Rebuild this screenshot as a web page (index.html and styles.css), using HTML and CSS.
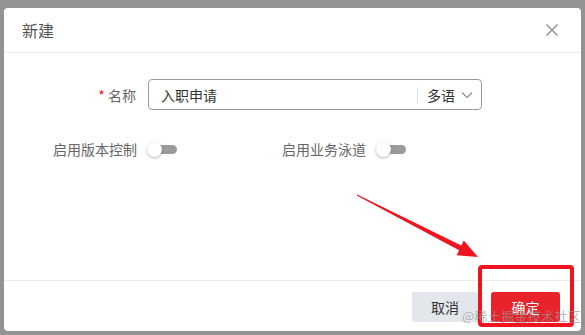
FILE: index.html
```html
<!DOCTYPE html>
<html lang="zh-CN">
<head>
    <meta charset="UTF-8">
    <title>新建</title>
    <link rel="stylesheet" href="styles.css">
</head>
<body>
    <div class="dialog">
        <div class="dialog-header">
            <span class="dialog-title">新建</span>
            <span class="dialog-close">
                <svg width="14" height="14" viewBox="0 0 14 14"><path d="M1.5 1.5 L12.5 12.5 M12.5 1.5 L1.5 12.5" stroke="#8a8a8a" stroke-width="1.4" fill="none"/></svg>
            </span>
        </div>

        <div class="dialog-body">
            <div class="form-row">
                <label class="form-label"><span class="required">*</span> 名称</label>
                <div class="name-input">
                    <span class="name-value">入职申请</span>
                    <span class="lang-select">
                        多语
                        <svg width="12" height="8" viewBox="0 0 12 8"><path d="M1 1.5 L6 6.5 L11 1.5" stroke="#888" stroke-width="1.1" fill="none"/></svg>
                    </span>
                </div>
            </div>

            <div class="switch-row">
                <div class="switch-item">
                    <span class="switch-label">启用版本控制</span>
                    <span class="switch"><span class="knob"></span></span>
                </div>
                <div class="switch-item second">
                    <span class="switch-label">启用业务泳道</span>
                    <span class="switch"><span class="knob"></span></span>
                </div>
            </div>
        </div>

        <div class="dialog-footer">
            <button class="btn btn-cancel">取消</button>
            <button class="btn btn-ok">确定</button>
        </div>
    </div>

    <!-- annotations over the screenshot -->
    <svg class="arrow" width="585" height="335" viewBox="0 0 585 335">
        <polygon points="357.2,194.4 461.3,245.4 463.8,240.6 478,257 456.6,255.2 459.1,250.3 356.8,195.6" fill="#f0141e"/>
    </svg>
    <div class="mark-box"></div>
    <div class="watermark">@稀土掘金技术社区</div>
</body>
</html>
```

FILE: styles.css
```css
body {
    margin: 0;
    width: 585px;
    height: 335px;
    background: #939393;
    font-family: "Noto Sans CJK SC", "Noto Sans", sans-serif;
    overflow: hidden;
}

.dialog {
    box-sizing: border-box;
    width: 577px;
    height: 323px;
    margin: 8px 0 0 4px;
    background: #fff;
    border-radius: 4px;
    display: flex;
    flex-direction: column;
}

.dialog-header {
    height: 44px;
    border-bottom: 1px solid #ececec;
    display: flex;
    align-items: center;
    justify-content: space-between;
    padding: 0 22px 0 18px;
}

.dialog-title {
    font-size: 16px;
    color: #555;
}

.dialog-close {
    display: flex;
}

.dialog-body {
    flex: 1;
    padding-top: 26px;
}

.form-row {
    display: flex;
    align-items: center;
}

.form-label {
    width: 132px;
    text-align: right;
    font-size: 14px;
    color: #666;
    margin-right: 12px;
}

.required {
    color: #f0141e;
}

.name-input {
    box-sizing: border-box;
    width: 334px;
    height: 31px;
    border: 1px solid #9a9a9a;
    border-radius: 4px;
    display: flex;
    align-items: center;
    justify-content: space-between;
    padding: 0 8px 0 12px;
}

.name-value {
    font-size: 14px;
    color: #333;
}

.lang-select {
    display: flex;
    align-items: center;
    gap: 6px;
    font-size: 14px;
    color: #333;
    border-left: 1px solid #ddd;
    padding-left: 9px;
    height: 16px;
    line-height: 16px;
}

.switch-row {
    display: flex;
    margin-top: 29px;
    padding-left: 49px;
}

.switch-item {
    display: flex;
    align-items: center;
    width: 229px;
}

.switch-item.second {
    width: auto;
}

.switch-label {
    font-size: 14px;
    color: #666;
    margin-right: 10px;
}

.switch {
    position: relative;
    width: 30px;
    height: 14px;
    display: inline-block;
}

.switch::before {
    content: "";
    position: absolute;
    left: 6px;
    top: 3px;
    width: 24px;
    height: 9px;
    border-radius: 5px;
    background: #9b9b9b;
}

.knob {
    position: absolute;
    left: 0;
    top: 0;
    width: 15px;
    height: 15px;
    border-radius: 50%;
    background: #fff;
    box-shadow: 0 1px 3px rgba(0, 0, 0, 0.3);
}

.dialog-footer {
    height: 51px;
    border-top: 1px solid #ececec;
    display: flex;
    justify-content: flex-end;
    align-items: flex-start;
    gap: 13px;
    padding: 11px 21px 0 0;
    box-sizing: border-box;
}

.btn {
    height: 30px;
    border: none;
    border-radius: 3px;
    font-size: 14px;
    font-family: inherit;
    cursor: pointer;
}

.btn-cancel {
    width: 66px;
    background: #e3e6ea;
    color: #333;
}

.btn-ok {
    width: 69px;
    background: #e8232b;
    color: #fff;
}

.arrow {
    position: absolute;
    left: 0;
    top: 0;
}

.mark-box {
    position: absolute;
    left: 478px;
    top: 265px;
    width: 88px;
    height: 54px;
    border: 4px solid #f0141e;
    border-radius: 4px;
}

.watermark {
    position: absolute;
    left: 462px;
    top: 306px;
    font-size: 13px;
    color: rgba(150, 150, 150, 0.7);
    letter-spacing: 0.3px;
}
```
